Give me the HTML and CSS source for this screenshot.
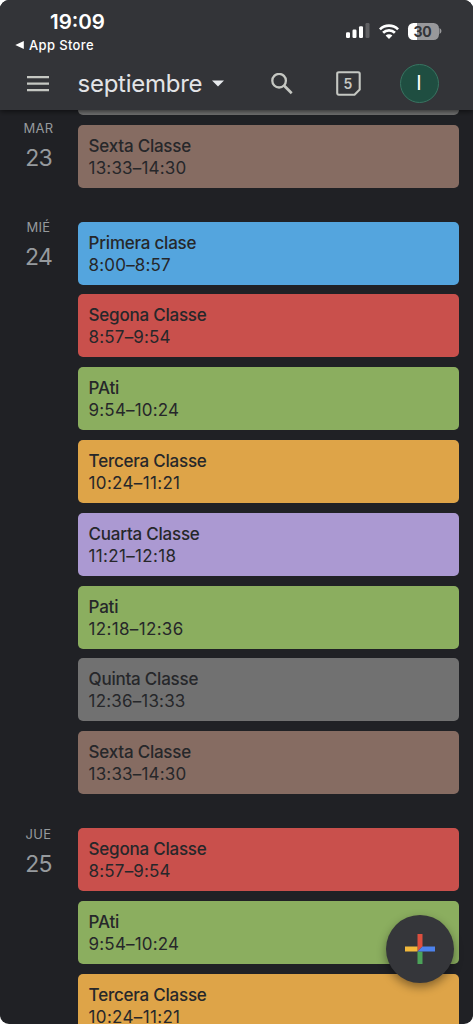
FILE: index.html
```html
<!DOCTYPE html>
<html lang="es">
<head>
<meta charset="utf-8">
<meta name="viewport" content="width=device-width, initial-scale=1">
<title>Calendario</title>
<link rel="stylesheet" href="styles.css">
</head>
<body>
<div class="screen">
  <header class="top">
    <div class="status">
      <div class="status-left">
        <div class="clock">19:09</div>
        <div class="back"><svg width="9" height="8" viewBox="0 0 9 8"><path d="M8.8 0v8L.3 4z" fill="#fff"/></svg><span>App Store</span></div>
      </div>
      <div class="status-right">
        <svg width="24" height="16" viewBox="0 0 24 16" fill="#fff"><rect x="0" y="9.3" width="4" height="5.7" rx="1.2"/><rect x="6.5" y="6.5" width="4" height="8.5" rx="1.2"/><rect x="13" y="3.3" width="4" height="11.7" rx="1.2"/><rect x="19.5" y="0" width="4" height="15" rx="1.2" fill="#606063"/></svg>
        <svg class="wifi" width="20" height="15" viewBox="0 0 20 15" fill="none" stroke="#fff" stroke-width="2.7"><path d="M.9 5.4a13 13 0 0 1 18.2 0"/><path d="M4.1 8.8a8.4 8.4 0 0 1 11.8 0"/><path d="M10 15 6.6 11.5a4.9 4.9 0 0 1 6.8 0z" fill="#fff" stroke="none"/></svg>
        <div class="battery"><span>30</span></div>
        <svg class="nub" width="3" height="6" viewBox="0 0 3 6"><path d="M.5 0Q2.5 1 2.5 3T.5 6z" fill="#98989b"/></svg>
      </div>
    </div>
    <nav class="bar">
      <svg class="menu" width="22" height="16" viewBox="0 0 22 16" fill="#c5c7c2"><path d="M0 0h22v2.3H0zM0 6.5h22v2.3H0zM0 13h22v2.3H0z"/></svg>
      <div class="month">septiembre</div>
      <svg class="caret" width="12" height="7" viewBox="0 0 12 7"><path d="M0 .4h12L6 6.6z" fill="#e8eaed"/></svg>
      <svg class="search" width="22" height="22" viewBox="0 0 22 22" fill="none" stroke="#c5c7c2"><circle cx="8.1" cy="7.7" r="6.8" stroke-width="2.3"/><path d="m13 12.5 7.7 7.7" stroke-width="2.7"/></svg>
      <div class="today">
        <svg width="25" height="25" viewBox="0 0 25 25" fill="none" stroke="#c5c7c2" stroke-width="2.1" stroke-linejoin="round"><path d="M2.8 1.2h19.4q1.5 0 1.5 1.5v15.8l-5.2 5.2H2.8q-1.6 0-1.6-1.6V2.8q0-1.6 1.6-1.6z"/></svg>
        <span>5</span>
      </div>
      <div class="avatar">I</div>
    </nav>
  </header>
  <main class="agenda">
    <section class="day">
      <div class="date"><div class="dow">MAR</div><div class="num">23</div></div>
      <div class="events">
        <div class="event gray"></div>
        <div class="event brown"><b>Sexta Classe</b><span>13:33–14:30</span></div>
      </div>
    </section>
    <section class="day">
      <div class="date"><div class="dow">MIÉ</div><div class="num">24</div></div>
      <div class="events">
        <div class="event blue"><b>Primera clase</b><span>8:00–8:57</span></div>
        <div class="event red"><b>Segona Classe</b><span>8:57–9:54</span></div>
        <div class="event green"><b>PAti</b><span>9:54–10:24</span></div>
        <div class="event orange"><b>Tercera Classe</b><span class="wide">10:24–11:21</span></div>
        <div class="event purple"><b>Cuarta Classe</b><span class="wide">11:21–12:18</span></div>
        <div class="event green"><b>Pati</b><span class="wide">12:18–12:36</span></div>
        <div class="event gray"><b>Quinta Classe</b><span>12:36–13:33</span></div>
        <div class="event brown"><b>Sexta Classe</b><span>13:33–14:30</span></div>
      </div>
    </section>
    <section class="day">
      <div class="date"><div class="dow">JUE</div><div class="num">25</div></div>
      <div class="events">
        <div class="event red"><b>Segona Classe</b><span>8:57–9:54</span></div>
        <div class="event green"><b>PAti</b><span>9:54–10:24</span></div>
        <div class="event orange"><b>Tercera Classe</b><span class="wide">10:24–11:21</span></div>
      </div>
    </section>
  </main>
  <div class="fab"><svg width="30" height="30" viewBox="0 0 30 30"><path d="M12.5 0h5v12.5l-5 5z" fill="#dc4f3e"/><path d="M0 12.5h12.5v5H0z" fill="#f3b93b"/><path d="M12.5 17.5h5V30h-5z" fill="#4ca359"/><path d="M17.5 12.5H30v5H12.5z" fill="#4d82ec"/></svg></div>
</div>
</body>
</html>
```
FILE: styles.css
```css
* { box-sizing: border-box; }
body { margin: 0; background: #fff; font-family: Inter, "Liberation Sans", sans-serif; }
svg { display: block; flex: none; }
.screen { position: relative; width: 473px; height: 1024px; overflow: hidden; border-radius: 9px; background: #202125; display: flex; flex-direction: column; }
.top { position: relative; z-index: 1; flex: none; height: 110px; background: #333438; box-shadow: 0 1px 6px rgba(0,0,0,.65); color: #fff; }
.status { display: flex; justify-content: space-between; height: 56px; padding: 11px 31px 0 15px; }
.clock { padding-left: 35px; font-size: 20.5px; line-height: 22px; font-weight: 600; letter-spacing: 0; }
.back { display: flex; align-items: center; gap: 5px; margin-top: 4px; font-size: 13px; line-height: 16px; font-weight: 500; letter-spacing: .35px; }
.status-right { display: flex; align-items: center; height: 40px; }
.wifi { margin: 0 9px 0 9px; }
.battery { width: 31px; height: 17px; border-radius: 5.5px; background: linear-gradient(90deg, #fff 30%, #98989b 30%); color: #333438; font-size: 14px; line-height: 17px; font-weight: 700; text-align: center; padding-right: 2px; letter-spacing: -.2px; }
.bar { display: flex; align-items: center; height: 55px; padding: 0 34px 0 27px; }
.month { width: 125px; margin-left: 28.5px; color: #e3e4e7; font-size: 24px; line-height: 32px; font-weight: 400; letter-spacing: -.25px; white-space: nowrap; }
.caret { margin-left: 9px; }
.search { margin-left: 47.5px; }
.today { display: grid; margin-left: 42.5px; place-items: center; color: #c5c7c2; }
.today > * { grid-area: 1 / 1; }
.today span { font-size: 14px; font-weight: 600; line-height: 16px; }
.avatar { width: 39px; height: 39px; margin-left: 39px; flex: none; border: 1px solid #387461; border-radius: 50%; background: #1f4e41; font-size: 20px; line-height: 37px; text-align: center; }
.agenda { display: flex; flex-direction: column; gap: 34px; margin-top: -58.25px; }
.day { display: flex; }
.date { width: 77px; flex: none; margin-right: .6px; text-align: center; color: #969a9e; }
.day:first-child .date { padding-top: 70.75px; }
.dow { margin-top: -3.4px; font-size: 13px; line-height: 18px; letter-spacing: .3px; }
.num { margin-top: 7px; font-size: 23px; line-height: 28px; letter-spacing: -.8px; }
.events { display: flex; flex-direction: column; gap: 9.8px; width: 381px; }
.event { height: 63px; padding: 10px 11px; border-radius: 5px; color: #26272a; font-size: 17px; line-height: 22px; white-space: nowrap; }
.event b, .event span { display: block; }
.event b { font-weight: 500; letter-spacing: -.23px; }
.event span { letter-spacing: .17px; }
.event .wide { letter-spacing: .33px; }
.brown { background: #866c62; }
.blue { background: #54a5de; }
.red { background: #c9504c; }
.green { background: #8bae5f; }
.orange { background: #dea448; }
.purple { background: #ab99d2; }
.gray { background: #717171; }
.fab { position: absolute; z-index: 2; left: 385.5px; top: 914.5px; width: 68px; height: 68px; border-radius: 50%; background: #35363a; box-shadow: 0 4px 10px rgba(0,0,0,.4); display: grid; place-items: center; }
```
